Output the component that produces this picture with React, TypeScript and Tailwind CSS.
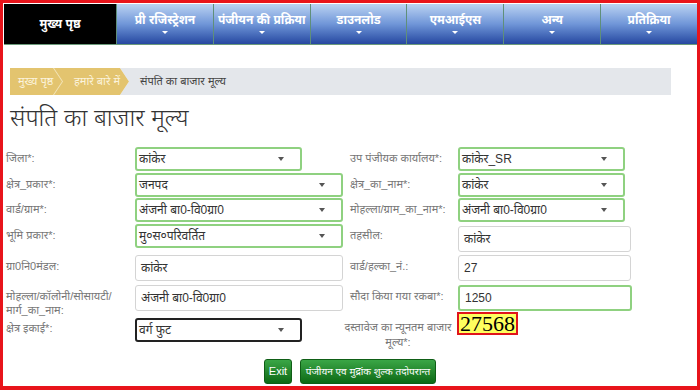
import { ReactNode } from 'react';

const navItems = ['प्री रजिस्ट्रेशन', 'पंजीयन की प्रक्रिया', 'डाउनलोड', 'एमआईएस', 'अन्य', 'प्रतिक्रिया'];

function Caret() {
  return <span className="inline-block w-0 h-0 border-l-[3px] border-r-[3px] border-t-[4px] border-l-transparent border-r-transparent border-t-[#555]" />;
}

function Select({ value, wide, dark }: { value: string; wide?: boolean; dark?: boolean }) {
  return (
    <div
      className={`flex items-center justify-between h-[24px] pl-[2px] pr-[16px] rounded-[3px] bg-white border-2 ${
        wide ? 'w-[208px]' : 'w-[167px]'
      } ${dark ? 'border-[#222]' : 'border-[#8fd180]'}`}
    >
      <span className="text-[12px] text-[#333] leading-none">{value}</span>
      <Caret />
    </div>
  );
}

function Input({ value, w, green }: { value: string; w: string; green?: boolean }) {
  return (
    <div
      className={`flex items-center h-[26px] px-[5px] rounded-[3px] bg-white ${w} ${
        green ? 'border-2 border-[#8fd180]' : 'border border-[#d4d4d4]'
      }`}
    >
      <span className="text-[12px] text-[#333] leading-none">{value}</span>
    </div>
  );
}

function Label({ children }: { children: ReactNode }) {
  return <div className="text-[11px] leading-[14px] text-[#777] pt-[4px]">{children}</div>;
}

function Row({ h, children }: { h: string; children: ReactNode }) {
  return <div className={`grid grid-cols-[129px_215px_108px_180px] items-start ${h}`}>{children}</div>;
}

export default function App() {
  return (
    <div className="w-[700px] h-[390px] overflow-hidden bg-white border-[3px] border-b-4 border-[#e8141b] font-['Liberation_Sans','Noto_Sans',sans-serif]">
      {/* top nav */}
      <div className="flex h-[41px] mt-px ml-px border-b border-[#6b9a7a]">
        <div className="w-[112px] bg-black text-white text-[12px] font-bold flex items-center justify-center">
          मुख्य पृष्ठ
        </div>
        {navItems.map((item) => (
          <div
            key={item}
            className="flex-1 flex flex-col items-center justify-center gap-[5px] border-l border-[#5f8f7a] bg-gradient-to-b from-[#bcd3f2] via-[#7096d8] to-[#2747a0] text-white text-[12px] font-bold"
          >
            <span className="leading-none">{item}</span>
            <span className="w-0 h-0 border-l-[3px] border-r-[3px] border-t-[3px] border-l-transparent border-r-transparent border-t-white" />
          </div>
        ))}
      </div>

      {/* breadcrumb */}
      <div className="ml-[7px] mt-[23px] w-[661px] h-[27px] bg-[#e4e7eb] flex items-center">
        <div className="flex h-full bg-[#f4e6bd] [clip-path:polygon(0_0,calc(100%-9px)_0,100%_50%,calc(100%-9px)_100%,0_100%)]">
          <div className="w-[52px] h-full bg-[#e3c46f] flex items-center pl-[8px] text-[11px] text-[#fbf3dc] [clip-path:polygon(0_0,calc(100%-9px)_0,100%_50%,calc(100%-9px)_100%,0_100%)]">
            मुख्य पृष्ठ
          </div>
          <div className="w-[75px] -ml-[8px] h-full bg-[#e3c46f] flex items-center pl-[20px] text-[11px] text-[#fbf3dc] [clip-path:polygon(0_0,calc(100%-9px)_0,100%_50%,calc(100%-9px)_100%,0_100%,9px_50%)]">
            हमारे बारे में
          </div>
        </div>
        <span className="ml-[11px] text-[11px] text-[#444]">संपति का बाजार मूल्य</span>
      </div>

      {/* title */}
      <h1 className="ml-[7px] mt-[8px] text-[24px] leading-[30px] font-light text-[#333]">संपति का बाजार मूल्य</h1>

      {/* form */}
      <div className="ml-[3px] mt-[14px] flex flex-col">
        <Row h="h-[26px]">
          <Label>जिला*:</Label>
          <Select value="कांकेर" />
          <Label>उप पंजीयक कार्यालय*:</Label>
          <Select value="कांकेर_SR" />
        </Row>
        <Row h="h-[25px]">
          <Label>क्षेत्र_प्रकार*:</Label>
          <Select value="जनपद" wide />
          <Label>क्षेत्र_का_नाम*:</Label>
          <Select value="कांकेर" />
        </Row>
        <Row h="h-[26px]">
          <Label>वार्ड/ग्राम*:</Label>
          <Select value="अंजनी बा0-वि0ग्रा0" wide />
          <Label>मोहल्ला/ग्राम_का_नाम*:</Label>
          <Select value="अंजनी बा0-वि0ग्रा0" />
        </Row>
        <Row h="h-[31px]">
          <Label>भूमि प्रकार*:</Label>
          <Select value="मु०स०परिवर्तित" wide />
          <Label>तहसील:</Label>
          <div className="pt-[2px]">
            <Input value="कांकेर" w="w-[173px]" />
          </div>
        </Row>
        <Row h="h-[30px]">
          <Label>ग्रा0नि0मंडल:</Label>
          <Input value="कांकेर" w="w-[208px]" />
          <Label>वार्ड/हल्का_नं.:</Label>
          <Input value="27" w="w-[173px]" />
        </Row>
        <Row h="h-[32px]">
          <Label>
            मोहल्ला/कॉलोनी/सोसायटी/
            <br />
            मार्ग_का_नाम:
          </Label>
          <Input value="अंजनी बा0-वि0ग्रा0" w="w-[208px]" />
          <Label>सौदा किया गया रकबा*:</Label>
          <Input value="1250" w="w-[174px]" green />
        </Row>
        <Row h="h-[40px]">
          <Label>क्षेत्र इकाई*:</Label>
          <div className="pt-[1px]">
            <Select value="वर्ग फुट" dark />
          </div>
          <div className="-ml-[12px] pt-[3px] text-[11px] leading-[15px] text-[#777] text-center">
            दस्तावेज का न्यूनतम बाजार
            <br />
            मूल्य*:
          </div>
          <div className="-mt-[5px] -ml-px">
            <span className="inline-block px-px bg-[#ffff5e] border-2 border-[#e0141b] font-['Liberation_Serif',serif] text-[22px] leading-[19px] text-black">
              27568
            </span>
          </div>
        </Row>
      </div>

      {/* buttons */}
      <div className="mt-[2px] flex justify-center gap-[8px]">
        <button className="h-[25px] w-[28px] rounded-[3px] border border-[#0f5e16] bg-gradient-to-b from-[#3aa646] to-[#0b6a14] text-white text-[11px]">
          Exit
        </button>
        <button className="h-[25px] w-[136px] rounded-[3px] border border-[#0f5e16] bg-gradient-to-b from-[#3aa646] to-[#0b6a14] text-white text-[10px] whitespace-nowrap">
          पंजीयन एव मुद्रांक शुल्क तदोपरान्त
        </button>
      </div>
    </div>
  );
}
